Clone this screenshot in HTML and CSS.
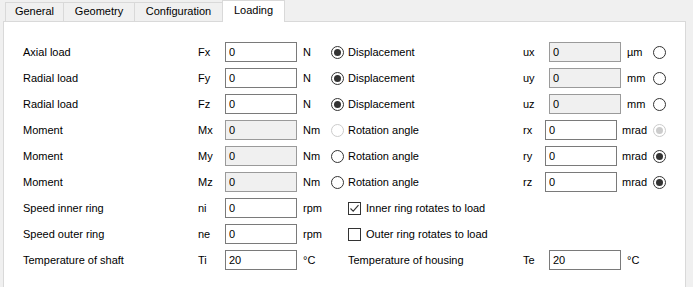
FILE: index.html
```html
<!DOCTYPE html>
<html lang="en">
<head>
    <meta charset="UTF-8">
    <title>Loading</title>
    <link rel="stylesheet" href="styles.css">
</head>
<body>
    <!-- Tab strip -->
    <div class="tabbar">
        <div class="tab tab-general">General</div>
        <div class="tab tab-geometry">Geometry</div>
        <div class="tab tab-config">Configuration</div>
        <div class="tab tab-active">Loading</div>
    </div>

    <div class="panel">
        <!-- Forces / displacements -->
        <div class="row">
            <span class="lbl">Axial load</span><span class="sym">Fx</span>
            <input class="field" type="text" value="0"><span class="unit">N</span>
            <label class="opt"><input class="radio" type="radio" name="fx" checked>Displacement</label>
            <span class="sym2">ux</span>
            <input class="field" type="text" value="0" disabled><span class="unit2">µm</span>
            <input class="radio" type="radio" name="fx">
        </div>
        <div class="row">
            <span class="lbl">Radial load</span><span class="sym">Fy</span>
            <input class="field" type="text" value="0"><span class="unit">N</span>
            <label class="opt"><input class="radio" type="radio" name="fy" checked>Displacement</label>
            <span class="sym2">uy</span>
            <input class="field" type="text" value="0" disabled><span class="unit2">mm</span>
            <input class="radio" type="radio" name="fy">
        </div>
        <div class="row">
            <span class="lbl">Radial load</span><span class="sym">Fz</span>
            <input class="field" type="text" value="0"><span class="unit">N</span>
            <label class="opt"><input class="radio" type="radio" name="fz" checked>Displacement</label>
            <span class="sym2">uz</span>
            <input class="field" type="text" value="0" disabled><span class="unit2">mm</span>
            <input class="radio" type="radio" name="fz">
        </div>

        <!-- Moments / rotation angles -->
        <div class="row">
            <span class="lbl">Moment</span><span class="sym">Mx</span>
            <input class="field" type="text" value="0" disabled><span class="unit">Nm</span>
            <label class="opt"><input class="radio" type="radio" name="mx" disabled>Rotation angle</label>
            <span class="sym2 sym-r">rx</span>
            <input class="field" type="text" value="0"><span class="unit2 unit-r">mrad</span>
            <input class="radio" type="radio" name="mx" checked disabled>
        </div>
        <div class="row">
            <span class="lbl">Moment</span><span class="sym">My</span>
            <input class="field" type="text" value="0" disabled><span class="unit">Nm</span>
            <label class="opt"><input class="radio" type="radio" name="my">Rotation angle</label>
            <span class="sym2 sym-r">ry</span>
            <input class="field" type="text" value="0"><span class="unit2 unit-r">mrad</span>
            <input class="radio" type="radio" name="my" checked>
        </div>
        <div class="row">
            <span class="lbl">Moment</span><span class="sym">Mz</span>
            <input class="field" type="text" value="0" disabled><span class="unit">Nm</span>
            <label class="opt"><input class="radio" type="radio" name="mz">Rotation angle</label>
            <span class="sym2 sym-r">rz</span>
            <input class="field" type="text" value="0"><span class="unit2 unit-r">mrad</span>
            <input class="radio" type="radio" name="mz" checked>
        </div>

        <!-- Speeds -->
        <div class="row">
            <span class="lbl">Speed inner ring</span><span class="sym">ni</span>
            <input class="field" type="text" value="0"><span class="unit">rpm</span>
            <label class="chk">
                <span class="box"><svg width="11" height="11" viewBox="0 0 11 11"><path d="M1.5 5.5 L4.2 8.2 L9.5 2.2" fill="none" stroke="#333" stroke-width="1.1"/></svg></span>
                Inner ring rotates to load
            </label>
        </div>
        <div class="row">
            <span class="lbl">Speed outer ring</span><span class="sym">ne</span>
            <input class="field" type="text" value="0"><span class="unit">rpm</span>
            <label class="chk"><span class="box"></span>Outer ring rotates to load</label>
        </div>

        <!-- Temperatures -->
        <div class="row">
            <span class="lbl">Temperature of shaft</span><span class="sym">Ti</span>
            <input class="field" type="text" value="20"><span class="unit">°C</span>
            <span class="lbl2">Temperature of housing</span><span class="sym2">Te</span>
            <input class="field" type="text" value="20"><span class="unit2">°C</span>
        </div>
    </div>
</body>
</html>
```

FILE: styles.css
```css
body {
    margin: 0;
    background: #f0f0f0;
    font-family: 'Liberation Sans', Arial, sans-serif;
    font-size: 11px;
    color: #000;
    height: 287px;
    overflow: hidden;
}

/* Tabs */
.tabbar {
    display: flex;
    align-items: flex-end;
    height: 21px;
    padding-left: 5px;
}

.tab {
    box-sizing: border-box;
    height: 19px;
    line-height: 17px;
    text-align: center;
    border: 1px solid #d9d9d9;
    border-bottom: none;
    margin-right: -1px;
    background: #f0f0f0;
}

.tab-general { width: 59px; }
.tab-geometry { width: 72px; }
.tab-config { width: 89px; }

.tab-active {
    width: 63px;
    height: 22px;
    line-height: 19px;
    margin-bottom: -1px;
    background: #fff;
    position: relative;
    z-index: 1;
}

/* Page */
.panel {
    box-sizing: border-box;
    margin-left: 3px;
    width: 683px;
    height: 266px;
    background: #fff;
    border: 1px solid #d9d9d9;
    border-bottom: none;
    padding: 20px 0 0 19px;
}

.row {
    display: flex;
    align-items: center;
    height: 20px;
    margin-bottom: 6px;
    white-space: nowrap;
}

.lbl { width: 175px; }
.sym { width: 27px; }
.unit { width: 27px; padding-left: 6px; }
.sym2 { width: 26px; }
.unit2 { width: 26px; padding-left: 6px; }
.sym-r { width: 22px; }
.unit-r { width: 31px; padding-left: 5px; }
.lbl2 { width: 175px; margin-left: 18px; }

.field {
    box-sizing: border-box;
    width: 72px;
    height: 20px;
    margin: 0;
    padding: 0 3px;
    border: 1px solid #7a7a7a;
    border-radius: 0;
    font: inherit;
    color: #000;
    background: #fff;
    outline: none;
}

.field:disabled {
    background: #f0f0f0;
    border-color: #9a9a9a;
    color: #000;
}

/* Radio buttons */
.radio {
    appearance: none;
    -webkit-appearance: none;
    box-sizing: border-box;
    width: 13px;
    height: 13px;
    margin: 0;
    border: 1px solid #333;
    border-radius: 50%;
    background: #fff;
    display: inline-flex;
    align-items: center;
    justify-content: center;
}

.radio:checked::after {
    content: "";
    width: 7px;
    height: 7px;
    border-radius: 50%;
    background: #333;
}

.radio:disabled { border-color: #cccccc; }
.radio:disabled:checked::after { background: #cccccc; }

.opt {
    width: 192px;
    margin-left: 1px;
    display: flex;
    align-items: center;
    gap: 4px;
}

/* Check boxes */
.chk {
    display: flex;
    align-items: center;
    gap: 5px;
    margin-left: 18px;
}

.box {
    box-sizing: border-box;
    width: 13px;
    height: 13px;
    border: 1px solid #333;
    background: #fff;
    display: flex;
    align-items: center;
    justify-content: center;
}
```
